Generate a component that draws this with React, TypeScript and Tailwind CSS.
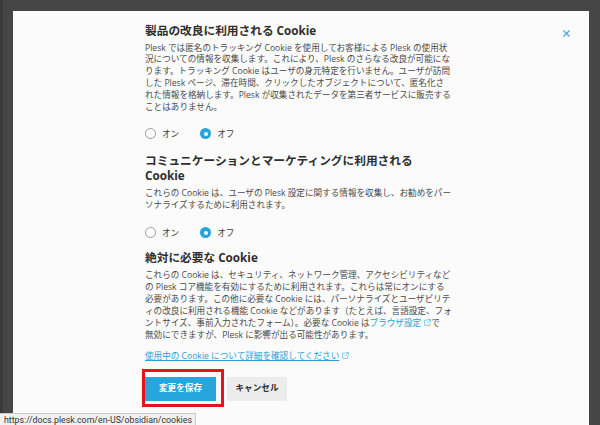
import React from "react";

const FONT = { fontFamily: '"Open Sans", "Noto Sans CJK JP", sans-serif' };

function Radio({ checked, label }: { checked: boolean; label: string }) {
  return (
    <div className="flex items-center">
      {checked ? (
        <span className="w-[11px] h-[11px] rounded-full bg-[#27a3dc] flex items-center justify-center">
          <span className="w-[4px] h-[4px] rounded-full bg-white" />
        </span>
      ) : (
        <span className="w-[11px] h-[11px] rounded-full border border-[#9b9b9b] bg-white" />
      )}
      <span className="ml-[6px] text-[8.6px] leading-[12px] text-[#3a3a3a]">{label}</span>
    </div>
  );
}

function RadioRow({ mt }: { mt: string }) {
  return (
    <div className={`flex items-center gap-[21px] ${mt}`}>
      <Radio checked={false} label="オン" />
      <Radio checked={true} label="オフ" />
    </div>
  );
}

function Ext() {
  return (
    <svg width="7" height="7" viewBox="0 0 7 7" className="inline-block ml-[3px] align-baseline" fill="none" stroke="#6fbfe6" strokeWidth="0.8">
      <path d="M3 1.2H0.6V6.4H5.8V4" />
      <path d="M3.6 0.5H6.5V3.4M6.5 0.5L3 4" />
    </svg>
  );
}

function Lines({ lines }: { lines: React.ReactNode[] }) {
  return (
    <div className="text-[8.6px] leading-[11.9px] text-[#4a4a4a]">
      {lines.map((l, i) => (
        <div key={i} className="whitespace-nowrap">
          {l}
        </div>
      ))}
    </div>
  );
}

export default function App() {
  return (
    <div className="relative w-[600px] h-[425px] overflow-hidden bg-[#464646]" style={FONT}>
      <div className="absolute left-0 top-0 w-[3px] h-[425px] bg-[#3a3a3a]" />
      <div className="pt-[11px] pl-[13px]">
        <div className="relative w-[576px] h-[430px] bg-[#fbfbfb]">
          <button className="absolute left-[547px] top-[16px] w-[12px] h-[12px] flex items-center justify-center">
            <svg width="7" height="7" viewBox="0 0 7 7" stroke="#4da8d8" strokeWidth="1.3">
              <path d="M0.5 0.5L6.5 6.5M6.5 0.5L0.5 6.5" />
            </svg>
          </button>
          <div className="flex flex-col pl-[132px] pt-[11.5px]">
            <div className="text-[11.7px] leading-[15px] font-bold text-[#2e2e2e]">
              製品の改良に利用される Cookie
            </div>
            <div className="mt-[5px]">
              <Lines
                lines={[
                  "Plesk では匿名のトラッキング Cookie を使用してお客様による Plesk の使用状",
                  "況についての情報を収集します。これにより、Plesk のさらなる改良が可能にな",
                  "ります。トラッキング Cookie はユーザの身元特定を行いません。ユーザが訪問",
                  "した Plesk ページ、滞在時間、クリックしたオブジェクトについて、匿名化さ",
                  "れた情報を格納します。Plesk が収集されたデータを第三者サービスに販売する",
                  "ことはありません。",
                ]}
              />
            </div>
            <RadioRow mt="mt-[14px]" />
            <div className="mt-[13px] text-[11.7px] leading-[15px] font-bold text-[#2e2e2e]">
              <div>コミュニケーションとマーケティングに利用される</div>
              <div>Cookie</div>
            </div>
            <div className="mt-[5px]">
              <Lines
                lines={[
                  "これらの Cookie は、ユーザの Plesk 設定に関する情報を収集し、お勧めをパー",
                  "ソナライズするために利用されます。",
                ]}
              />
            </div>
            <RadioRow mt="mt-[15px]" />
            <div className="mt-[11.5px] text-[11.7px] leading-[15px] font-bold text-[#2e2e2e]">
              絶対に必要な Cookie
            </div>
            <div className="mt-[5px]">
              <Lines
                lines={[
                  "これらの Cookie は、セキュリティ、ネットワーク管理、アクセシビリティなど",
                  "の Plesk コア機能を有効にするために利用されます。これらは常にオンにする",
                  "必要があります。この他に必要な Cookie には、パーソナライズとユーザビリテ",
                  "ィの改良に利用される機能 Cookie などがあります（たとえば、言語設定、フォ",
                  <>
                    ントサイズ、事前入力されたフォーム）。必要な Cookie は
                    <span className="text-[#2a9fd8]">ブラウザ設定</span>
                    <Ext />で
                  </>,
                  "無効にできますが、Plesk に影響が出る可能性があります。",
                ]}
              />
            </div>
            <div className="mt-[9px] text-[8.6px] leading-[11.9px] whitespace-nowrap">
              <span className="text-[#2a9fd8] underline">使用中の Cookie について詳細を確認してください</span>
              <Ext />
            </div>
            <div className="mt-[14px] flex items-center gap-[11px]">
              <div className="relative">
                <button className="w-[71px] h-[24px] bg-[#27a5dd] text-white text-[8.6px] font-bold flex items-center justify-center">
                  変更を保存
                </button>
                <div className="absolute left-[-3px] top-[-8px] w-[82px] h-[38px] border-[3px] border-[#e8141c]" />
              </div>
              <button className="w-[60px] h-[24px] bg-[#ececec] text-[#2e2e2e] text-[8.6px] font-bold flex items-center justify-center">
                キャンセル
              </button>
            </div>
          </div>
        </div>
      </div>
      <div
        className="absolute left-0 top-[413px] w-[196px] h-[14px] bg-[#f1f1f1] border-t border-r border-[#c9c9c9] pl-[4px] text-[8.8px] leading-[12px] whitespace-nowrap text-[#333]"
        style={{ fontFamily: 'Roboto, sans-serif' }}
      >
        https://docs.plesk.com/en-US/obsidian/cookies
      </div>
    </div>
  );
}
